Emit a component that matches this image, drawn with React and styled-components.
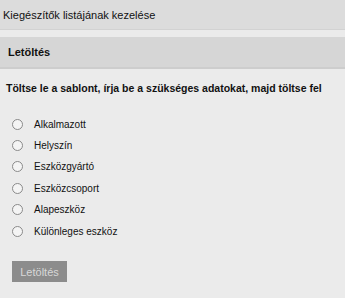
import React from "react";
import styled, { createGlobalStyle } from "styled-components";

const Global = createGlobalStyle`
  html, body { margin: 0; padding: 0; background: #ebebeb; }
  body { font-family: "Liberation Sans", Arial, sans-serif; color: #111; }
`;

const Page = styled.div`
  width: 345px;
  height: 298px;
  background: #ebebeb;
  display: flex;
  flex-direction: column;
`;

const TopBar = styled.div`
  height: 29px;
  background: #dcdcdc;
  border-bottom: 1px solid #d2d2d2;
  display: flex;
  align-items: center;
  padding-left: 3px;
  font-size: 11px;
  color: #111;
`;

const Spacer = styled.div`
  height: 7px;
`;

const SectionHeader = styled.div`
  height: 30px;
  background: #d6d6d6;
  border-bottom: 2px solid #cdcdcd;
  display: flex;
  align-items: center;
  padding-left: 8px;
  font-size: 11px;
  font-weight: bold;
`;

const Body = styled.div`
  padding: 13px 6px 0;
  display: flex;
  flex-direction: column;
`;

const Instruction = styled.div`
  font-size: 10.5px;
  font-weight: bold;
`;

const List = styled.div`
  display: flex;
  flex-direction: column;
  gap: 5px;
  margin-top: 22px;
  padding-left: 6px;
`;

const Option = styled.label`
  display: flex;
  align-items: center;
  height: 16.4px;
  font-size: 10px;
  gap: 11px;
`;

const Circle = styled.span`
  width: 9px;
  height: 9px;
  border-radius: 50%;
  border: 1px solid #8a8a8a;
  background: #f4f4f4;
  box-sizing: content-box;
`;

const Button = styled.div`
  margin-top: 22px;
  margin-left: 6px;
  width: 55px;
  height: 21px;
  background: #8c8c8c;
  color: #d8d8d8;
  font-size: 11px;
  display: flex;
  align-items: center;
  justify-content: center;
`;

const items = [
  "Alkalmazott",
  "Helyszín",
  "Eszközgyártó",
  "Eszközcsoport",
  "Alapeszköz",
  "Különleges eszköz",
];

export default function App() {
  return (
    <>
      <Global />
      <Page>
        <TopBar>Kiegészítők listájának kezelése</TopBar>
        <Spacer />
        <SectionHeader>Letöltés</SectionHeader>
        <Body>
          <Instruction>Töltse le a sablont, írja be a szükséges adatokat, majd töltse fel</Instruction>
          <List>
            {items.map((t) => (
              <Option key={t}>
                <Circle />
                {t}
              </Option>
            ))}
          </List>
          <Button>Letöltés</Button>
        </Body>
      </Page>
    </>
  );
}
